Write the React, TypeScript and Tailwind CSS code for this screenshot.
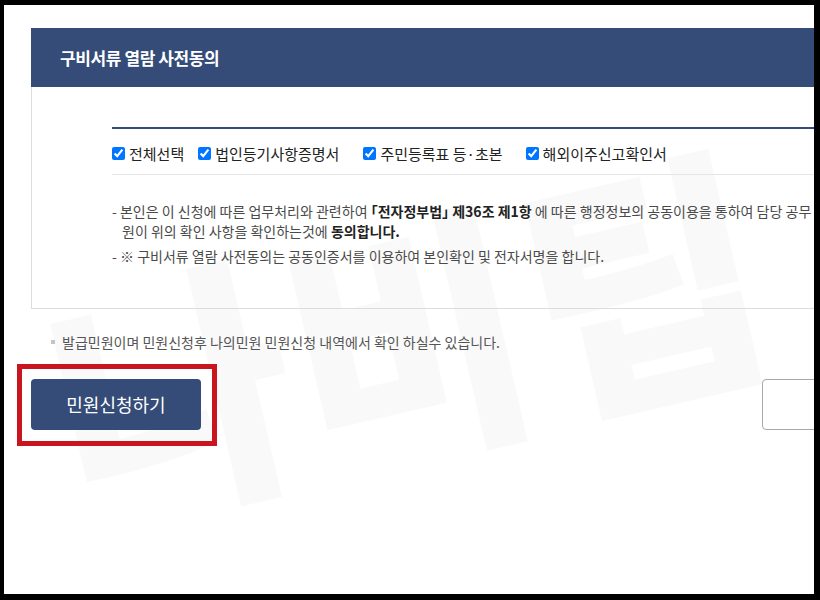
const NAVY = 'bg-[#344c77]';

type CheckProps = {
  label: string;
  className?: string;
};

const CheckItem = ({ label, className }: CheckProps) => (
  <label className={`flex items-center ${className ?? ''}`}>
    <input type="checkbox" defaultChecked className="w-[13px] h-[13px] m-0" />
    <span className="ml-[4px] text-[15px] text-[#222] leading-none">{label}</span>
  </label>
);

const App = () => {
  return (
    <div className="w-[820px] h-[600px] bg-black pl-[4px] pt-[5px]">
      <div className="relative w-[810px] h-[589px] bg-white overflow-hidden font-['Noto_Sans_CJK_KR',sans-serif]">
        {/* watermark */}
        <div className="pointer-events-none absolute left-[40px] top-[185px] w-[790px] h-[260px] text-[260px] leading-none font-black text-black/[0.025] -rotate-[13deg] whitespace-nowrap tracking-[2px]">
          나비팁
        </div>

        <div className="relative pl-[27px] pt-[23px] w-[1000px]">
          <section className="w-[900px]">
            <div className={`h-[59px] ${NAVY} flex items-center pl-[29px]`}>
              <h2 className="text-white text-[17px] font-bold tracking-[-0.4px]">
                구비서류 열람 사전동의
              </h2>
            </div>

            <div className="border-x border-b border-[#dcdcdc] pl-[80px] pt-[40px] pb-[42px]">
              <div className={`h-[2px] ${NAVY}`} />
              <div className="h-[46px] pt-[4px] flex items-center border-b border-[#e6e6e6]">
                <CheckItem label="전체선택" className="mr-[14px]" />
                <CheckItem label="법인등기사항증명서" className="mr-[24px]" />
                <CheckItem label="주민등록표 등·초본" className="mr-[23px]" />
                <CheckItem label="해외이주신고확인서" />
              </div>

              <div className="mt-[26px] text-[14px] leading-[20px] text-[#4a4a4a] whitespace-nowrap">
                <p className="pl-[10px] -indent-[10px]">
                  - 본인은 이 신청에 따른 업무처리와 관련하여{' '}
                  <b className="text-[#222]">｢전자정부법｣ 제36조 제1항</b> 에 따른 행정정보의
                  공동이용을 통하여 담당 공무
                  <br />
                  원이 위의 확인 사항을 확인하는것에 <b className="text-[#222]">동의합니다.</b>
                </p>
                <p className="mt-[5px]">
                  - ※ 구비서류 열람 사전동의는 공동인증서를 이용하여 본인확인 및 전자서명을 합니다.
                </p>
              </div>
            </div>
          </section>

          <p className="mt-[23px] pl-[20px] flex items-center text-[14px] leading-[20px] text-[#555]">
            <span className="w-[4px] h-[4px] bg-[#c4c4c4] mr-[7px]" />
            발급민원이며 민원신청후 나의민원 민원신청 내역에서 확인 하실수 있습니다.
          </p>

          <div className="relative mt-[27px] flex gap-[561px]">
            <button className={`w-[170px] h-[51px] ${NAVY} rounded-[4px] text-white text-[18px]`}>
              민원신청하기
            </button>
            <button className="w-[120px] h-[51px] border border-[#a8a8a8] rounded-[4px] bg-white" />
            <div className="pointer-events-none absolute -left-[14px] -top-[15px] w-[200px] h-[82px] border-[5px] border-[#c9161e]" />
          </div>
        </div>
      </div>
    </div>
  );
};

export default App;
